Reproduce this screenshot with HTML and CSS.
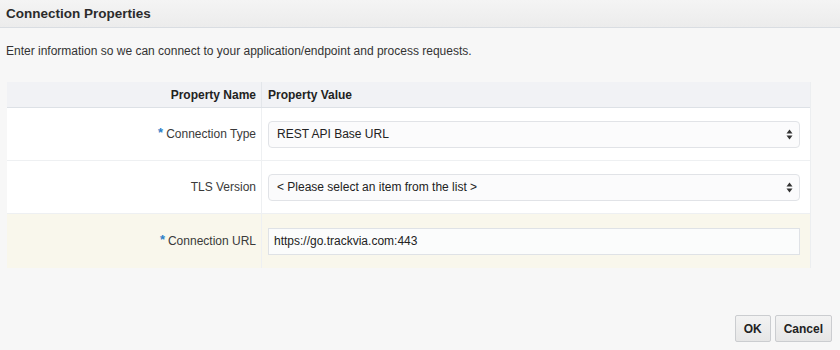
FILE: index.html
```html
<html>
  <head>
    <title>Connection Properties</title>
    <link rel="stylesheet" href="styles.css">
  </head>
  <body>
    <div class="dialog">
      <div class="dialog-header">Connection Properties</div>

      <div class="dialog-body">
        <p class="intro">Enter information so we can connect to your application/endpoint and process requests.</p>

        <div class="props">
          <div class="props-row props-head">
            <div class="props-name">Property Name</div>
            <div class="props-value">Property Value</div>
          </div>

          <div class="props-row">
            <div class="props-name"><span class="req">*</span> Connection Type</div>
            <div class="props-value">
              <div class="select">
                <span>REST API Base URL</span>
                <svg class="spinner" width="7" height="11" viewBox="0 0 7 11">
                  <path d="M3.5 0.5 L6.5 4.5 L0.5 4.5 Z" fill="#333"/>
                  <path d="M3.5 10.5 L6.5 6.5 L0.5 6.5 Z" fill="#333"/>
                </svg>
              </div>
            </div>
          </div>

          <div class="props-row">
            <div class="props-name">TLS Version</div>
            <div class="props-value">
              <div class="select">
                <span>&lt; Please select an item from the list &gt;</span>
                <svg class="spinner" width="7" height="11" viewBox="0 0 7 11">
                  <path d="M3.5 0.5 L6.5 4.5 L0.5 4.5 Z" fill="#333"/>
                  <path d="M3.5 10.5 L6.5 6.5 L0.5 6.5 Z" fill="#333"/>
                </svg>
              </div>
            </div>
          </div>

          <div class="props-row props-active">
            <div class="props-name"><span class="req">*</span> Connection URL</div>
            <div class="props-value">
              <input class="text-field" type="text" value="https://go.trackvia.com:443">
            </div>
          </div>
        </div>
      </div>

      <div class="dialog-footer">
        <button class="btn">OK</button>
        <button class="btn">Cancel</button>
      </div>
    </div>
  </body>
</html>
```

FILE: styles.css
```css
body {
  margin: 0px;
  background-color: #f7f7f7;
  font-family: "Liberation Sans", Arial, sans-serif;
  color: #333333;
}

.dialog {
  width: 840px;
  height: 350px;
  display: flex;
  flex-direction: column;
}

.dialog-header {
  height: 27px;
  line-height: 27px;
  padding-left: 6px;
  font-size: 13.5px;
  font-weight: bold;
  color: #2b2b2b;
  background: linear-gradient(#f4f4f4, #ececec);
  border-bottom: 1px solid #d9dde2;
}

.dialog-body {
  padding: 0px 29px 0px 7px;
}

.intro {
  margin: 16px 0px 24px -1px;
  font-size: 12px;
  line-height: 14px;
  color: #333333;
}

.props {
  background-color: #ffffff;
  border-right: 1px solid #eceef0;
}

.props-row {
  display: flex;
  height: 52px;
  border-bottom: 1px solid #eef0f2;
}

.props-head {
  height: 25px;
  background-color: #f1f2f5;
  border-bottom: 1px solid #dde1e6;
  font-size: 12.5px;
  font-weight: bold;
  color: #222222;
}

.props-active {
  height: 54px;
  background-color: #f9f7ec;
  border-bottom: none;
}

.props-name {
  width: 249px;
  padding-right: 5px;
  display: flex;
  align-items: center;
  justify-content: flex-end;
  font-size: 12px;
  color: #3a3a3a;
  border-right: 1px solid #eef0f2;
}

.props-head .props-name {
  color: #222222;
  border-right: 1px solid #e3e6ea;
}

.props-value {
  flex: 1;
  display: flex;
  align-items: center;
  padding: 0px 10px 0px 6px;
  font-size: 12px;
}

.req {
  color: #2f7fc8;
  font-size: 13px;
  font-weight: bold;
  position: relative;
  top: -2px;
  margin-right: 3px;
}

.select {
  flex: 1;
  height: 25px;
  display: flex;
  align-items: center;
  justify-content: space-between;
  padding: 0px 6px 0px 8px;
  background-color: #fbfbfc;
  border: 1px solid #e1e3e7;
  border-radius: 4px;
  font-size: 12px;
  color: #222222;
}

.spinner {
  display: block;
}

.text-field {
  flex: 1;
  height: 27px;
  padding: 0px 5px;
  margin: 0px;
  background-color: #fbfcfc;
  border: 1px solid #dfe2e6;
  border-radius: 0px;
  font-family: "Liberation Sans", Arial, sans-serif;
  font-size: 12px;
  color: #222222;
  outline: none;
}

.dialog-footer {
  margin-top: auto;
  display: flex;
  justify-content: flex-end;
  gap: 4px;
  padding: 0px 8px 8px 0px;
}

.btn {
  height: 27px;
  padding: 0px 8px;
  font-family: "Liberation Sans", Arial, sans-serif;
  font-size: 12px;
  font-weight: bold;
  color: #222222;
  background: linear-gradient(#f3f3f3, #e6e6e6);
  border: 1px solid #cbcdd0;
  border-radius: 2px;
}
```
